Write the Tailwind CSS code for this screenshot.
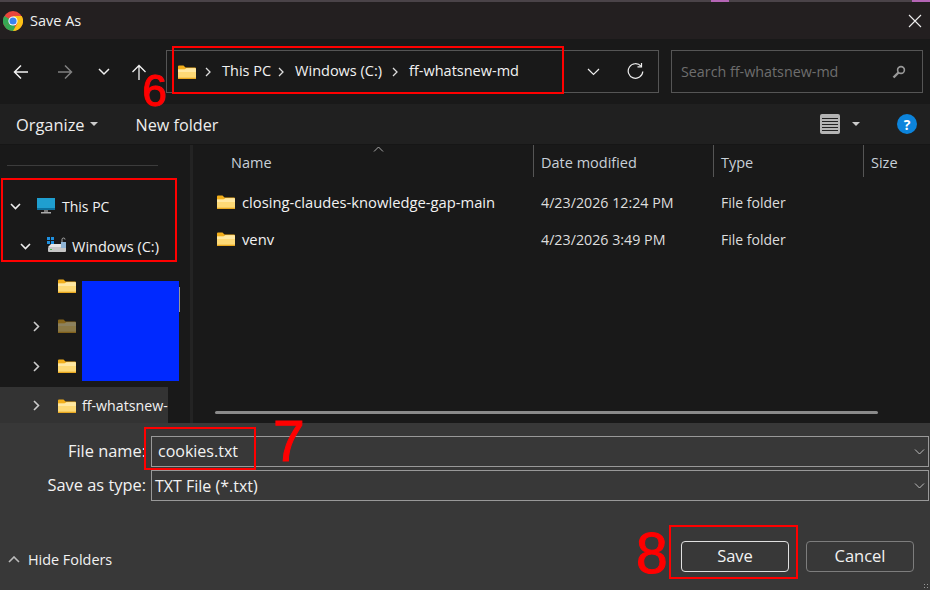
<!DOCTYPE html>
<html lang="en">
<head>
<meta charset="UTF-8">
<title>Save As</title>
<script src="https://cdn.jsdelivr.net/npm/@tailwindcss/browser@4"></script>
</head>
<body class="bg-[#191919]">
<svg class="hidden">
  <symbol id="folder" viewBox="0 0 18 14">
    <path d="M0 1.500a1 1 0 0 1 1-1h4.500l2 2H17a1 1 0 0 1 1 1V13a1 1 0 0 1-1 1H1a1 1 0 0 1-1-1z" fill="#f2ae1a"/>
    <path d="M0 4.500h6.500l2-1.300H17a1 1 0 0 1 1 1V13a1 1 0 0 1-1 1H1a1 1 0 0 1-1-1z" fill="#fdd976"/>
    <path d="M0 4.500h6.500l2-1.300H17a1 1 0 0 1 1 1V7H0z" fill="#ffe8a2"/>
    <rect x="0" y="12.700" width="18" height="1.300" fill="#e9a820"/>
  </symbol>
  <symbol id="crumb" viewBox="0 0 6 10">
    <path d="M1 1l4 4-4 4" fill="none" stroke="#ddd" stroke-width="1.300"/>
  </symbol>
</svg>

<div class="relative w-[930px] h-[590px] overflow-hidden flex flex-col text-[14.5px] text-[#f2f2f2] font-['Open_Sans','Noto_Sans',sans-serif]">
  <div class="h-[2px] bg-[#4a4348]"></div>

  <!-- title bar -->
  <div class="h-[37px] bg-[#231f20] flex items-center pl-[3px] pr-[8px]">
    <svg width="20" height="20" viewBox="0 0 20 20">
      <circle cx="10" cy="10" r="10" fill="#e8453c"/>
      <path d="M10 10 1.300 15A10 10 0 0 1 1.300 5z" fill="#34a853"/>
      <path d="M10 10 1.300 15A10 10 0 0 0 13 19.500z" fill="#34a853"/>
      <path d="M10 5h8.700A10 10 0 0 1 10 20l4.300-7.500z" fill="#fbc116"/>
      <circle cx="10" cy="10" r="4.600" fill="#fff"/>
      <circle cx="10" cy="10" r="3.600" fill="#3b82ee"/>
    </svg>
    <span class="ml-[7px] text-[#f0f0f0] text-[14.5px]">Save As</span>
    <svg class="ml-auto" width="14" height="14" viewBox="0 0 14 14" stroke="#eee" stroke-width="1.100" fill="none"><path d="M1 1l12 12M13 1 1 13"/></svg>
  </div>

  <!-- nav bar -->
  <div class="h-[65px] bg-[#191919] flex items-center relative">
    <div class="w-[166px] h-full flex items-center shrink-0 pl-[13px]">
      <svg width="16" height="16" viewBox="0 0 16 16" fill="none" stroke="#f2f2f2" stroke-width="1.500"><path d="M15 8H1.500M8 1.500 1.500 8 8 14.500"/></svg>
      <svg class="ml-[28px]" width="16" height="16" viewBox="0 0 16 16" fill="none" stroke="#808080" stroke-width="1.500"><path d="M1 8h13.500M8 1.500 14.500 8 8 14.500"/></svg>
      <svg class="ml-[25px]" width="12" height="8" viewBox="0 0 12 8" fill="none" stroke="#eee" stroke-width="1.500"><path d="M1 1l5 5 5-5"/></svg>
      <svg class="ml-[21px]" width="16" height="16" viewBox="0 0 16 16" fill="none" stroke="#f2f2f2" stroke-width="1.300"><path d="M8 16V1.500M1.500 8 8 1.500 14.500 8"/></svg>
    </div>
    <div class="w-[493px] h-[43px] border border-[#555] flex items-center pl-[11px] pr-[14px] shrink-0 text-[14.5px]">
      <svg class="w-[18px] h-[14px]"><use href="#folder"/></svg>
      <svg class="ml-[9px] w-[6px] h-[10px]"><use href="#crumb"/></svg>
      <span class="ml-[11px] -mt-[2px]">This PC</span>
      <svg class="ml-[7px] w-[6px] h-[10px]"><use href="#crumb"/></svg>
      <span class="ml-[11px] -mt-[2px]">Windows (C:)</span>
      <svg class="ml-[10px] w-[6px] h-[10px]"><use href="#crumb"/></svg>
      <span class="ml-[11px] -mt-[2px]">ff-whatsnew-md</span>
      <svg class="ml-auto" width="13" height="8" viewBox="0 0 13 8" fill="none" stroke="#eee" stroke-width="1.200"><path d="M1 1l5.500 5.500L12 1"/></svg>
      <svg class="ml-[27px]" width="17" height="17" viewBox="0 0 17 17" fill="none" stroke="#eee" stroke-width="1.200"><path d="M14 3.200A7.300 7.300 0 1 0 15.800 8.500"/><path d="M10.500 3.800h4V0" /></svg>
    </div>
    <div class="ml-[12px] w-[252px] h-[43px] border border-[#555] flex items-center pl-[9px] pr-[16px] shrink-0">
      <span class="text-[#6e6e6e] text-[14.3px]">Search ff-whatsnew-md</span>
      <svg class="ml-auto" width="14" height="14" viewBox="0 0 14 14" fill="none" stroke="#999"><circle cx="9" cy="5" r="3.400" stroke-width="1.600"/><path d="M6.500 7.500 1.500 12.500" stroke-width="2.400"/></svg>
    </div>
  </div>

  <!-- toolbar -->
  <div class="h-[41px] bg-[#202020] flex items-center pl-[16px] pr-[13px] border-b border-[#161616]">
    <span class="text-[16.4px] text-[#ededed] mt-[2px]">Organize</span>
    <span class="ml-[5px] w-0 h-0 border-x-[4px] border-x-transparent border-t-[4px] border-t-[#ccc]"></span>
    <span class="ml-[38px] text-[16.2px] text-[#ededed] mt-[2px]">New folder</span>
    <div class="ml-auto w-[20px] h-[20px] rounded-[2px] bg-[#b4b4b4] flex flex-col justify-center gap-[2px] px-[2px]">
      <div class="h-[1px] bg-[#222]"></div><div class="h-[1px] bg-[#222]"></div><div class="h-[1px] bg-[#222]"></div><div class="h-[1px] bg-[#222]"></div><div class="h-[1px] bg-[#222]"></div>
    </div>
    <span class="ml-[12px] w-0 h-0 border-x-[4px] border-x-transparent border-t-[4px] border-t-[#ccc]"></span>
    <div class="ml-[37px] w-[20px] h-[20px] rounded-full bg-[#0c84dc] flex items-center justify-center text-white text-[14px] font-bold">?</div>
  </div>

  <!-- body -->
  <div class="flex-1 flex min-h-0">
    <div class="w-[190px] shrink-0 relative overflow-hidden">
      <div class="ml-[7px] mt-[20px] w-[151px] h-[1px] bg-[#3c3c3c]"></div>
      <div class="mt-[20px]">
        <div class="h-[40px] flex items-center pl-[10px]">
          <svg width="11" height="7" viewBox="0 0 11 7" fill="none" stroke="#eee" stroke-width="1.600"><path d="M1 1l4.500 4.500L10 1"/></svg>
          <svg class="ml-[16px]" width="18" height="16" viewBox="0 0 18 16"><rect width="18" height="11.500" fill="#1f9fd0"/><rect x="0" y="10" width="18" height="2" fill="#0c6f9c"/><rect x="7" y="12" width="4" height="2" fill="#777"/><rect x="4" y="14" width="10" height="1.500" fill="#aaa"/></svg>
          <span class="ml-[7px] text-[14px]">This PC</span>
        </div>
        <div class="h-[40px] flex items-center pl-[20px]">
          <svg width="11" height="7" viewBox="0 0 11 7" fill="none" stroke="#eee" stroke-width="1.600"><path d="M1 1l4.500 4.500L10 1"/></svg>
          <svg class="ml-[16px] -mt-[2px]" width="20" height="16" viewBox="0 0 20 16"><rect x="0" y="0" width="3" height="3" fill="#1e90e0"/><rect x="4" y="0" width="3" height="3" fill="#1e90e0"/><rect x="0" y="4" width="3" height="3" fill="#1e90e0"/><rect x="4" y="4" width="3" height="3" fill="#1e90e0"/><rect x="1" y="10" width="18" height="5" rx="1" fill="#c6c6c6"/><path d="M1 10l3-3h12v3z" fill="#e4e4e4"/><rect x="3" y="12" width="2" height="1" fill="#43c04a"/><rect x="14" y="5" width="5" height="6" fill="#8fb4d4"/><path d="M15 5V2.500a1.500 1.500 0 0 1 3 0" fill="none" stroke="#aaa"/></svg>
          <span class="ml-[5px] text-[14.5px] mt-[2px]">Windows (C:)</span>
        </div>
        <div class="h-[40px] flex items-center pl-[58px]">
          <svg class="w-[18px] h-[14px]"><use href="#folder"/></svg>
        </div>
        <div class="h-[40px] flex items-center pl-[33px]">
          <svg width="7" height="11" viewBox="0 0 7 11" fill="none" stroke="#ccc" stroke-width="1.600"><path d="M1 1l4.500 4.500L1 10"/></svg>
          <svg class="ml-[18px] w-[18px] h-[14px] opacity-50"><use href="#folder"/></svg>
        </div>
        <div class="h-[40px] flex items-center pl-[33px]">
          <svg width="7" height="11" viewBox="0 0 7 11" fill="none" stroke="#ccc" stroke-width="1.600"><path d="M1 1l4.500 4.500L1 10"/></svg>
          <svg class="ml-[18px] w-[18px] h-[14px]"><use href="#folder"/></svg>
        </div>
        <div class="mt-[1px] w-[168px] h-[36px] bg-[#333333] flex items-center pl-[33px] pt-[1px] overflow-hidden whitespace-nowrap">
          <svg class="shrink-0" width="7" height="11" viewBox="0 0 7 11" fill="none" stroke="#ccc" stroke-width="1.600"><path d="M1 1l4.500 4.500L1 10"/></svg>
          <svg class="ml-[18px] shrink-0 w-[18px] h-[14px]"><use href="#folder"/></svg>
          <span class="ml-[6px] text-[14.2px]">ff-whatsnew-md</span>
        </div>
      </div>
      <div class="absolute left-[179px] top-[142px] w-[1px] h-[25px] bg-[#999]"></div>
    </div>
    <div class="w-[3px] bg-[#232323] shrink-0"></div>

    <div class="flex-1 relative">
      <div class="h-[33px] flex items-center relative text-[14.5px] text-[#c8d0d8]">
        <span class="absolute left-[38px] top-[7px]">Name</span>
        <svg class="absolute left-[180px] top-[1px]" width="11" height="6" viewBox="0 0 11 6" fill="none" stroke="#aaa"><path d="M1 5.500l4.500-4.500L10 5.500"/></svg>
        <div class="absolute left-[340px] top-0 h-[32px] w-[1px] bg-[#555]"></div>
        <span class="absolute left-[348px] top-[7px]">Date modified</span>
        <div class="absolute left-[520px] top-0 h-[32px] w-[1px] bg-[#555]"></div>
        <span class="absolute left-[528px] top-[7px]">Type</span>
        <div class="absolute left-[670px] top-0 h-[32px] w-[1px] bg-[#555]"></div>
        <span class="absolute left-[678px] top-[7px]">Size</span>
      </div>
      <div class="pt-[6px]">
        <div class="h-[37px] flex items-center pl-[24px]">
          <svg class="w-[18px] h-[14px] -mt-[2px]"><use href="#folder"/></svg>
          <span class="ml-[7px] w-[299px] text-[14.76px]">closing-claudes-knowledge-gap-main</span>
          <span class="w-[180px] text-[#ddd] text-[14.25px]">4/23/2026 12:24 PM</span>
          <span class="text-[#ddd] text-[14px]">File folder</span>
        </div>
        <div class="h-[37px] flex items-center pl-[24px]">
          <svg class="w-[18px] h-[14px] -mt-[2px]"><use href="#folder"/></svg>
          <span class="ml-[7px] w-[299px] text-[14.76px]">venv</span>
          <span class="w-[180px] text-[#ddd] text-[14.25px]">4/23/2026 3:49 PM</span>
          <span class="text-[#ddd] text-[14px]">File folder</span>
        </div>
      </div>
      <div class="absolute left-[22px] top-[266px] w-[663px] h-[3px] rounded-full bg-[#8a8a8a]"></div>
    </div>
  </div>

  <!-- bottom -->
  <div class="h-[167px] bg-[#383838] relative shrink-0">
    <div class="pt-[13px] flex flex-col gap-[3px] pr-[1px]">
      <div class="flex items-center">
        <span class="w-[146px] text-right text-[16.4px]">File name:</span>
        <div class="ml-[5px] flex-1 h-[31px] border border-[#999] flex items-center pl-[6px] pr-[3px] pb-[2px] text-[16px]">
          cookies.txt
          <svg class="ml-auto mt-[2px]" width="11" height="6" viewBox="0 0 11 6" fill="none" stroke="#bbb"><path d="M1 .5l4.500 4.500L10 .5"/></svg>
        </div>
      </div>
      <div class="flex items-center">
        <span class="w-[146px] text-right text-[16.4px]">Save as type:</span>
        <div class="ml-[5px] flex-1 h-[31px] border border-[#999] flex items-center pl-[3px] pr-[3px] text-[16px]">
          TXT File (*.txt)
          <svg class="ml-auto" width="11" height="6" viewBox="0 0 11 6" fill="none" stroke="#bbb"><path d="M1 .5l4.500 4.500L10 .5"/></svg>
        </div>
      </div>
    </div>
    <div class="flex items-center pl-[8px] pr-[16px] mt-[40px]">
      <svg class="translate-y-[3px]" width="12" height="7" viewBox="0 0 12 7" fill="none" stroke="#bbb" stroke-width="1.600"><path d="M1 6l5-5 5 5"/></svg>
      <span class="ml-[8px] text-[14.4px] translate-y-[3px]">Hide Folders</span>
      <button class="ml-auto w-[108px] h-[31px] rounded-[4px] border border-[#e0e0e0] text-[16.5px]">Save</button>
      <button class="ml-[17px] w-[108px] h-[31px] rounded-[4px] border border-[#7d7d7d] text-[16.5px]">Cancel</button>
    </div>
    <div class="absolute right-[1px] bottom-[1px] w-[6px] h-[6px] bg-[radial-gradient(#999_1px,transparent_1px)] bg-[length:3px_3px]"></div>
  </div>

  <!-- redaction and red annotations over the dialog -->
  <div class="absolute left-[711px] top-0 w-[18px] h-[2px] bg-[#b565b5]"></div>
  <div class="absolute left-[912px] top-0 w-[18px] h-[2px] bg-[#b565b5]"></div>
  <div class="absolute left-[82px] top-[281px] w-[97px] h-[100px] bg-[#0029ff]"></div>
  <div class="absolute left-[172px] top-[46px] w-[392px] h-[48px] border-2 border-[#ff0000]"></div>
  <div class="absolute left-[1px] top-[178px] w-[176px] h-[84px] border-2 border-[#ff0000]"></div>
  <div class="absolute left-[144px] top-[427px] w-[112px] h-[43px] border-2 border-[#ff0000]"></div>
  <div class="absolute left-[669px] top-[525px] w-[129px] h-[54px] border-2 border-[#ff0000]"></div>
  <span class="absolute left-[142px] top-[66px] text-[44px] leading-[50px] text-[#ff0000] [-webkit-text-stroke:1px_#ff0000] font-['Liberation_Sans',sans-serif]">6</span>
  <span class="absolute left-[273px] top-[409px] text-[57px] leading-[64px] text-[#ff0000] [-webkit-text-stroke:1px_#ff0000] font-['Liberation_Sans',sans-serif]">7</span>
  <span class="absolute left-[636px] top-[521px] text-[57px] leading-[64px] text-[#ff0000] [-webkit-text-stroke:1px_#ff0000] font-['Liberation_Sans',sans-serif]">8</span>
</div>
</body>
</html>
